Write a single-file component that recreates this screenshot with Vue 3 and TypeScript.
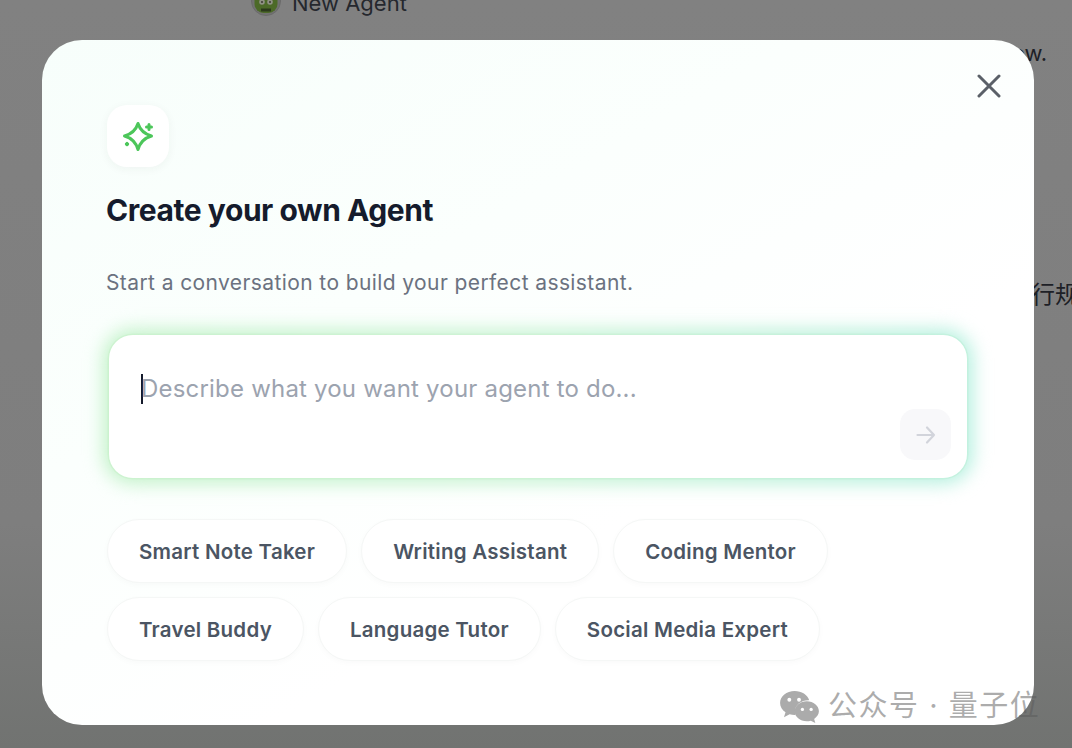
<template>
  <div class="page">
    <div class="behind">
      <div class="agent-row">
        <svg class="robot" viewBox="0 0 30 30" width="30" height="30">
          <circle cx="15" cy="15" r="14.5" fill="#727272" stroke="#6b6b6b" />
          <rect x="3.500" y="0" width="23" height="27" rx="9" fill="#4c6a28" />
          <circle cx="11" cy="16" r="2.800" fill="#8f9184" />
          <circle cx="19" cy="16" r="2.800" fill="#8f9184" />
          <circle cx="11" cy="16" r="1" fill="#3a3a30" />
          <circle cx="19" cy="16" r="1" fill="#3a3a30" />
          <rect x="10" y="22.500" width="10" height="3" fill="#2c3a1c" />
        </svg>
        <span class="agent-name">New Agent</span>
      </div>
      <span class="behind-en">new.</span>
      <span class="behind-zh">行规</span>
    </div>

    <div class="backdrop">
      <section class="modal">
        <button class="close" aria-label="Close">
          <svg viewBox="0 0 24 24" width="24" height="24" fill="none" stroke="#5b6068" stroke-width="3" stroke-linecap="round">
            <path d="M2 2 22 22M22 2 2 22" />
          </svg>
        </button>

        <div class="badge">
          <svg viewBox="0 0 32 32" width="32" height="32" fill="none" stroke="#4cc65a" stroke-width="3" stroke-linecap="round" stroke-linejoin="round">
            <path d="M16 3.500Q19 13 29.500 16 19 19 16 29.500 13 19 2.500 16 13 13 16 3.500Z" />
            <path d="M27 4.500V9.500M24.500 7H29.500" />
            <path d="M4.300 24H5.700M5 23.300V24.700" />
          </svg>
        </div>

        <h1>Create your own Agent</h1>
        <p class="sub">Start a conversation to build your perfect assistant.</p>

        <div class="prompt">
          <div class="glow"></div>
          <div class="placeholder"><i class="caret"></i>Describe what you want your agent to do...</div>
          <button class="send" aria-label="Send">
            <svg viewBox="0 0 24 24" width="24" height="24" fill="none" stroke="#d2d4db" stroke-width="2.200" stroke-linecap="round" stroke-linejoin="round">
              <path d="M3.500 12H20M13 4.500 20 12 13 19.500" />
            </svg>
          </button>
        </div>

        <div class="chips">
          <button v-for="c in chips" :key="c" class="chip">{{ c }}</button>
        </div>
      </section>
    </div>

    <div class="watermark">
      <svg viewBox="0 0 42 34" width="41" height="33" fill="#ababab">
        <path d="M16 1C7.700 1 1 6.500 1 13.300c0 3.900 2.200 7.300 5.600 9.600L5 28l5.800-3c1.700.5 3.400.8 5.200.8h.9c-.4-1.200-.6-2.400-.6-3.700 0-6.400 6.200-11.500 13.900-11.500h.8C29.300 5 23.200 1 16 1z" />
        <path d="M41 22c0-5.700-5.600-10.300-12.500-10.300S16 16.300 16 22s5.600 10.300 12.500 10.300c1.400 0 2.800-.2 4.100-.6l4.700 2.300-1.200-4.100C38.900 27.900 41 25.100 41 22z" />
        <circle cx="10.500" cy="10" r="2" fill="#fff" />
        <circle cx="20.500" cy="10" r="2" fill="#fff" />
        <circle cx="24" cy="20" r="1.700" fill="#fff" />
        <circle cx="33" cy="20" r="1.700" fill="#fff" />
      </svg>
      <span>公众号 · 量子位</span>
    </div>
  </div>
</template>

<script setup lang="ts">
const chips: string[] = [
  'Smart Note Taker',
  'Writing Assistant',
  'Coding Mentor',
  'Travel Buddy',
  'Language Tutor',
  'Social Media Expert',
]
</script>

<style scoped>
.page {
  position: relative;
  width: 1072px;
  height: 748px;
  overflow: hidden;
  background: linear-gradient(180deg, #818181 0%, #7e7e7e 70%, #717371 100%);
  font-family: Inter, "Noto Sans CJK SC", sans-serif;
}
.behind {
  position: absolute;
  inset: 0;
  color: #1d2026;
  font-size: 22px;
  white-space: nowrap;
}
.agent-row {
  position: absolute;
  left: 251px;
  top: -14px;
  display: flex;
  align-items: center;
  gap: 11px;
  color: #25282e;
}
.agent-name {
  position: relative;
  top: 2px;
}
.behind-en {
  position: absolute;
  left: 999px;
  top: 40px;
}
.behind-zh {
  position: absolute;
  left: 1031px;
  top: 280px;
  font-size: 24px;
  line-height: 30px;
}
.backdrop {
  position: absolute;
  inset: 0;
  padding: 40px 38px 23px 42px;
}
.modal {
  position: relative;
  box-sizing: border-box;
  height: 685px;
  padding: 65px 65px 0;
  border-radius: 40px;
  background: linear-gradient(150deg, #f7fefb 0%, #fbfffd 35%, #ffffff 65%, #ffffff 100%);
}
.close {
  position: absolute;
  top: 34px;
  right: 33px;
  width: 24px;
  height: 24px;
  padding: 0;
  border: 0;
  background: none;
}
.close svg { display: block; }
.badge {
  display: flex;
  align-items: center;
  justify-content: center;
  width: 62px;
  height: 62px;
  border-radius: 20px;
  background: #fff;
  box-shadow: 0 2px 10px rgba(30, 60, 40, 0.05);
}
h1 {
  margin: 24px 0 0 -1px;
  color: #151b2c;
  font-size: 30px;
  line-height: 38px;
  font-weight: 700;
  letter-spacing: -0.44px;
}
.sub {
  margin: 39px 0 0 -1px;
  color: #6b7280;
  font-size: 21px;
  line-height: 30px;
  letter-spacing: 0.4px;
}
.prompt {
  position: relative;
  z-index: 0;
  box-sizing: border-box;
  width: 858px;
  height: 143px;
  margin: 37px 0 0 2px;
  padding: 37px 32px 0;
  border-radius: 24px;
  background: #fff;
  box-shadow: 0 0 0 1.500px #e0f4dd;
}
.glow {
  position: absolute;
  inset: -6px;
  z-index: -2;
  border-radius: 30px;
  background: linear-gradient(95deg, #c3f2c9 0%, #c8f3d2 45%, #b6f0e0 100%);
  filter: blur(9px);
}
.prompt::before {
  content: "";
  position: absolute;
  inset: 0;
  z-index: -1;
  border-radius: 24px;
  background: #fff;
}
.placeholder {
  display: flex;
  align-items: center;
  color: #9ca3af;
  font-size: 24px;
  line-height: 34px;
  letter-spacing: 0.2px;
}
.caret {
  width: 2px;
  height: 30px;
  margin-right: -2px;
  background: #151b2c;
}
.send {
  position: absolute;
  right: 16px;
  bottom: 18px;
  display: flex;
  align-items: center;
  justify-content: center;
  width: 51px;
  height: 51px;
  padding: 0;
  border: 0;
  border-radius: 15px;
  background: #f8f8fa;
}
.chips {
  display: flex;
  flex-wrap: wrap;
  gap: 14px;
  width: 760px;
  margin-top: 41px;
}
.chip {
  box-sizing: border-box;
  height: 64px;
  padding: 0 31px;
  border: 1px solid #f5f7f6;
  border-radius: 32px;
  background: #fff;
  box-shadow: 0 2px 6px rgba(30, 60, 40, 0.025);
  color: #4b5563;
  font-family: inherit;
  font-size: 20.500px;
  font-weight: 600;
  letter-spacing: 0.25px;
}
.watermark {
  position: absolute;
  left: 779px;
  top: 688px;
  display: flex;
  align-items: center;
  gap: 8px;
  color: rgba(90, 90, 90, 0.5);
  font-size: 29px;
  line-height: 36px;
  letter-spacing: 1.500px;
  white-space: nowrap;
}
</style>

<style>
html, body { margin: 0; }
</style>
